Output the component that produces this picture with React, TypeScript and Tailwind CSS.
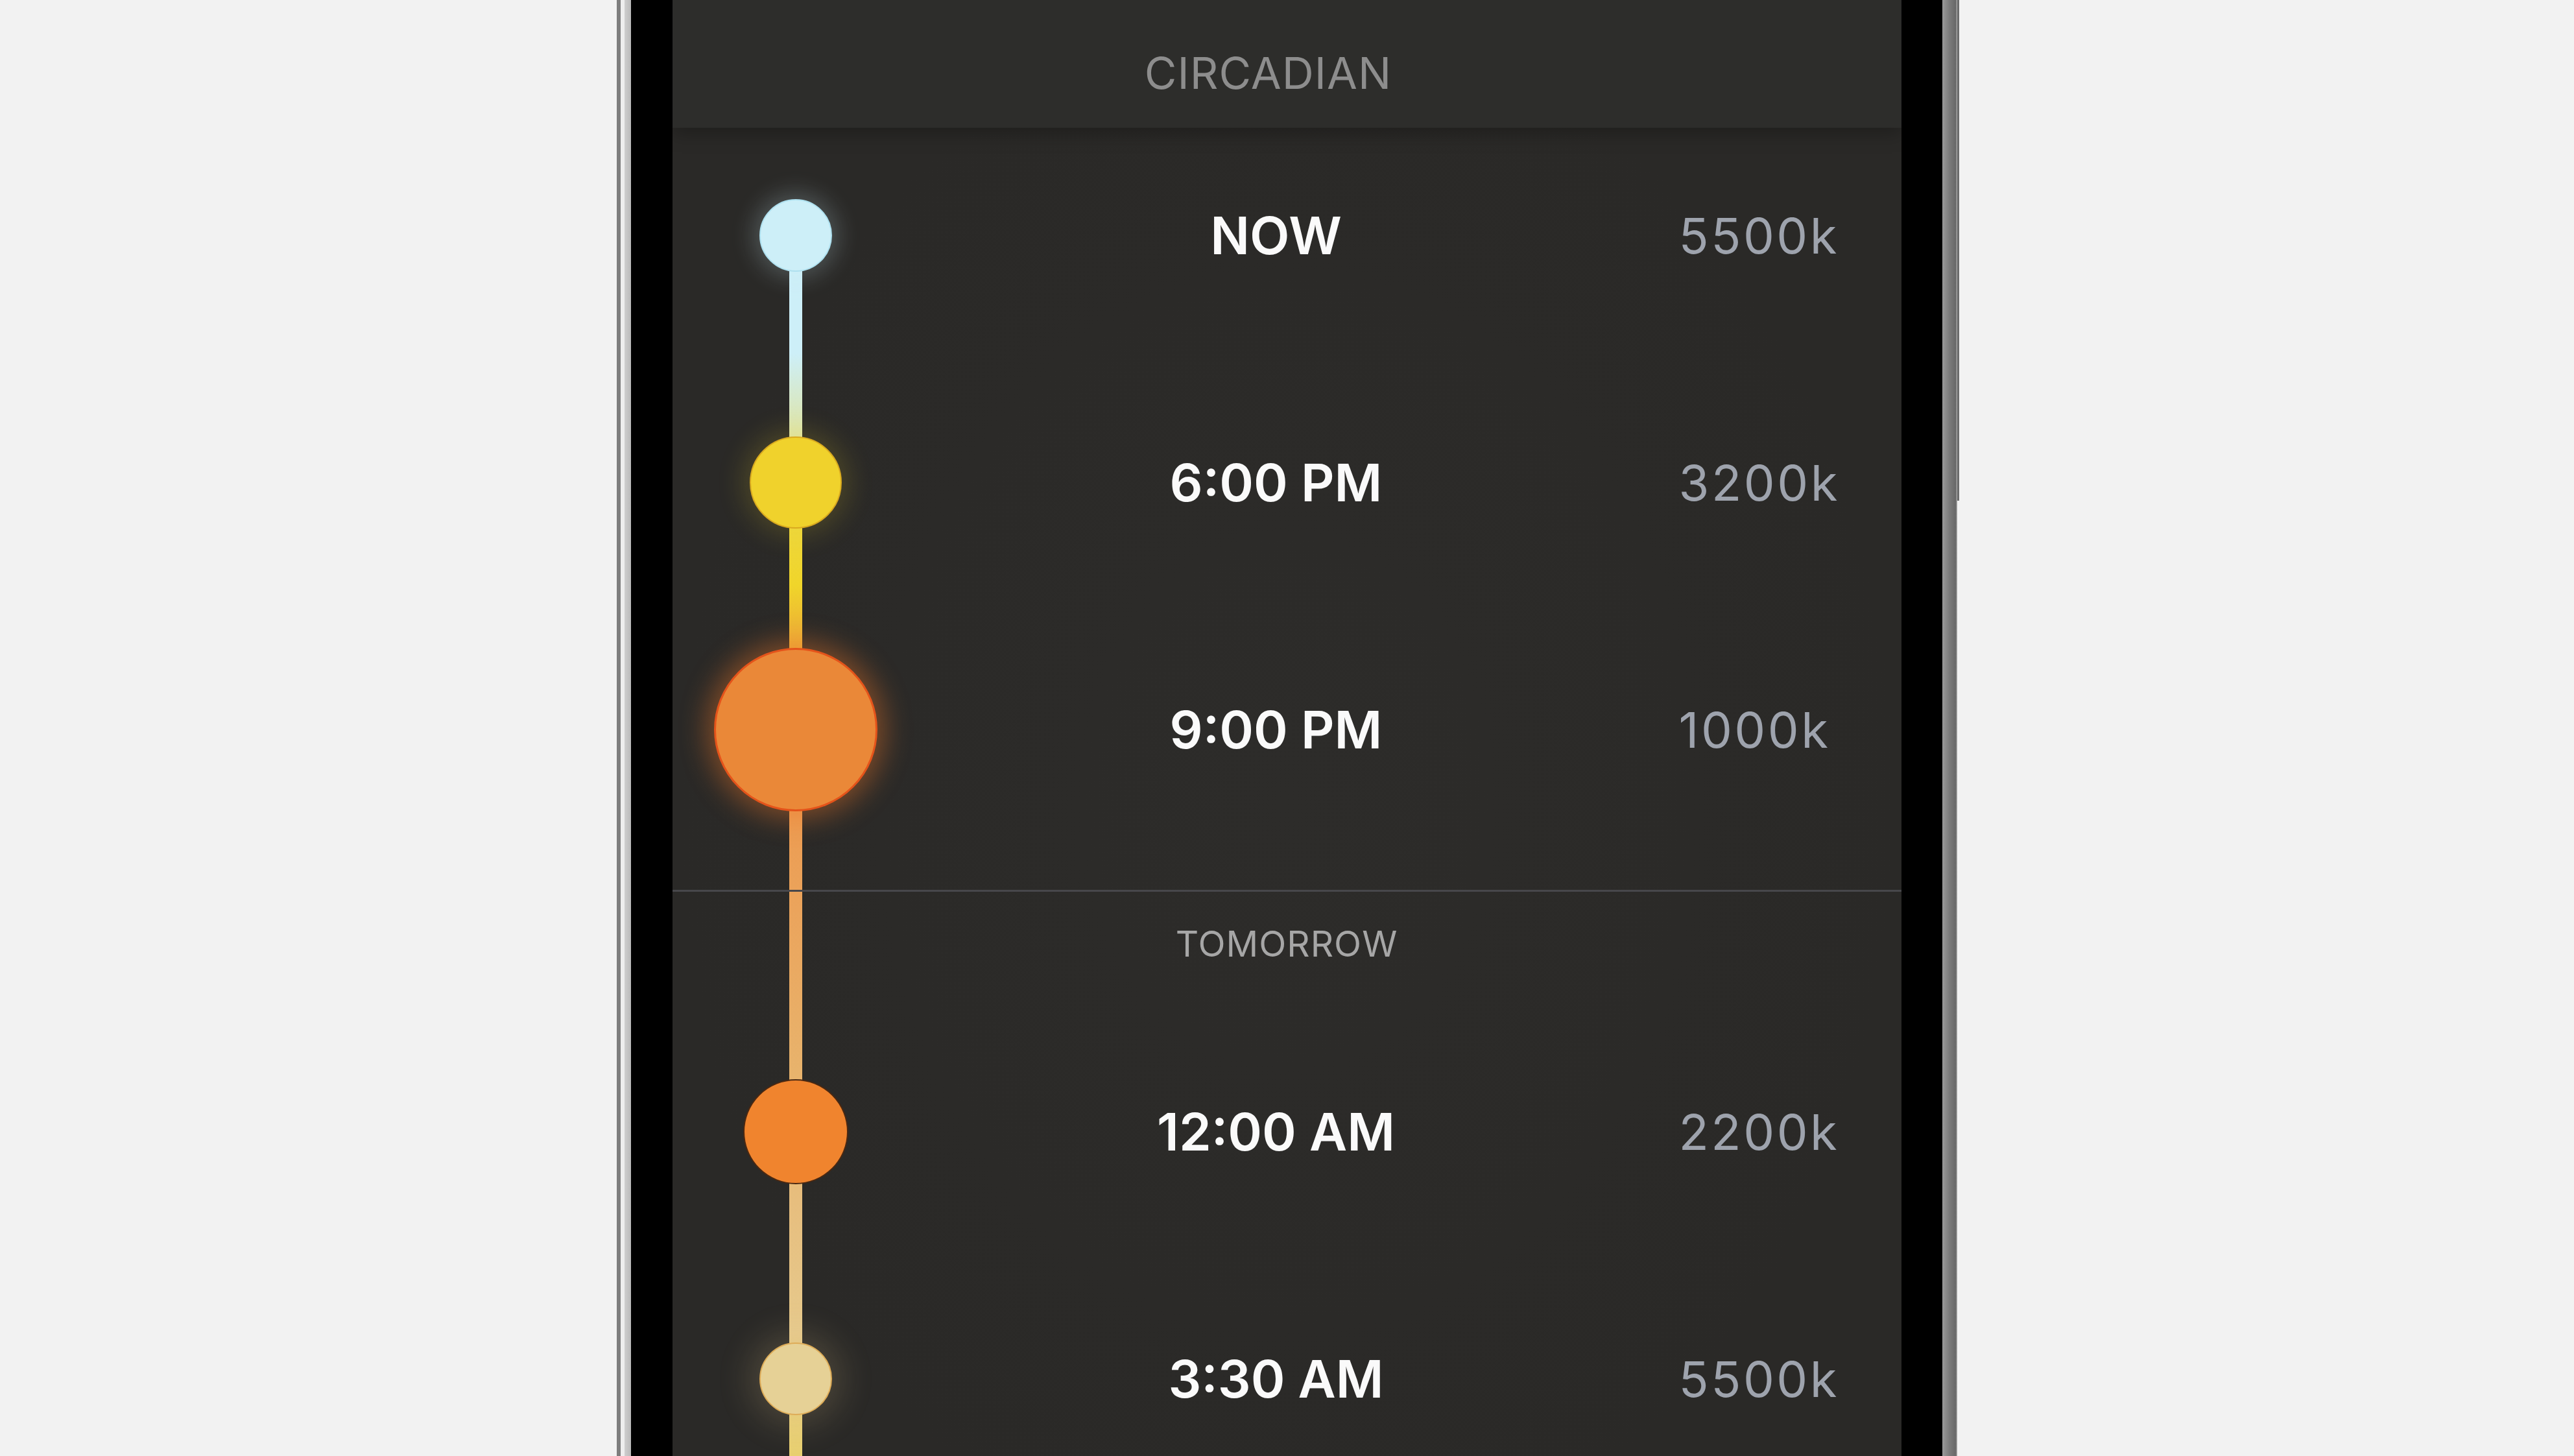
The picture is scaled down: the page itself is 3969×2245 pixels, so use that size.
import type { ReactNode } from "react";

type Stop = {
  time: string;
  kelvin: string;
  dot: string;
};

const TODAY: Stop[] = [
  {
    time: "NOW",
    kelvin: "5500k",
    dot: "h-[112px] w-[112px] border-2 border-[#aee0ef] bg-[#cdeff8] shadow-[0_0_34px_10px_rgba(205,235,245,0.22)]",
  },
  {
    time: "6:00 PM",
    kelvin: "3200k",
    dot: "h-[142px] w-[142px] border-2 border-[#d9a91f] bg-[#f0d22c] shadow-[0_0_40px_10px_rgba(240,210,40,0.18)]",
  },
  {
    time: "9:00 PM",
    kelvin: "1000k",
    dot: "h-[252px] w-[252px] border-[3px] border-[#e4531a] bg-[#ea8838] shadow-[0_0_40px_12px_rgba(238,118,40,0.42)]",
  },
];

const TOMORROW: Stop[] = [
  {
    time: "12:00 AM",
    kelvin: "2200k",
    dot: "h-[162px] w-[162px] border-2 border-[#4a2812] bg-[#f0842e]",
  },
  {
    time: "3:30 AM",
    kelvin: "5500k",
    dot: "h-[112px] w-[112px] border-2 border-[#deac58] bg-[#e6d196] shadow-[0_0_50px_16px_rgba(230,200,140,0.18)]",
  },
];

export default function App() {
  return (
    <div className="flex h-[2245px] w-full justify-center overflow-hidden bg-[#f2f2f2] font-['Inter','Liberation_Sans',sans-serif]">
      <div className="flex h-full">
        {/* left rail */}
        <div className="h-full w-[24px] bg-[linear-gradient(90deg,#f2f2f2_0_2px,#7e7e7e_2px_8px,#eeeeee_8px_14px,#cfcfcf_14px,#b9b9b9_24px)]" />
        <div className="h-full w-[64px] bg-black" />
        <Screen />
        <div className="h-full w-[63px] bg-black" />
        <div className="h-full w-[23px] bg-[linear-gradient(90deg,#9a9a9a,#7a7a7a_50%,#686868_90%,#b5b5b5)]" />
        <div className="w-[3px]">
          <div className="h-[772px] bg-[#6c6c6c]" />
        </div>
      </div>
    </div>
  );
}

function Screen() {
  return (
    <div className="relative flex h-full w-[1895px] flex-col bg-[radial-gradient(ellipse_at_50%_55%,#2d2c2a,#2a2927_70%)]">
      {/* timeline rail */}
      <div className="absolute bottom-0 left-[180px] top-[362px] w-[20px] bg-[linear-gradient(180deg,#cdeff8_0px,#cdeff8_183px,#e0e3a0_318px,#ecd84a_390px,#f0d52a_540px,#eca83a_640px,#ec8c3c_762px,#ec9c52_900px,#eba45c_1040px,#e8b36c_1290px,#e7be7e_1490px,#e6c98c_1690px,#e8d070_1883px)]" />

      <header className="relative z-10 h-[197px] shrink-0 bg-[#2d2d2b] pr-[57px] pt-[82px] text-center shadow-[0_8px_28px_rgba(0,0,0,0.28)]">
        <span className="text-[68px] font-normal leading-[60px] tracking-[1px] text-[#8d8d8d]">CIRCADIAN</span>
      </header>

      <div className="relative -mt-[25px] flex flex-col">
        {TODAY.map((s) => (
          <Row key={s.time} stop={s} />
        ))}
        <div className="h-[57px]" />
        <div className="relative z-[1] h-[3px] bg-[#47474b]" />
        <div className="h-[179px] pt-[58px] text-center">
          <span className="text-[55px] font-normal leading-[44px] tracking-[1px] text-[#a6a6a6]">TOMORROW</span>
        </div>
        {TOMORROW.map((s) => (
          <Row key={s.time} stop={s} />
        ))}
      </div>
    </div>
  );
}

function Row({ stop }: { stop: Stop }) {
  return (
    <div className="flex h-[381px] shrink-0 items-center">
      <Cell className="w-[380px] justify-center">
        <div className={`relative z-[2] rounded-full ${stop.dot}`} />
      </Cell>
      <Cell className="flex-1 justify-center">
        <span className="text-[80px] font-semibold leading-[80px] text-[#fafafa]">{stop.time}</span>
      </Cell>
      <Cell className="w-[413px] pl-[70px]">
        <span className="text-[76px] font-normal leading-[72px] tracking-[3.5px] text-[#9ea3ad]">{stop.kelvin}</span>
      </Cell>
    </div>
  );
}

function Cell({ className, children }: { className?: string; children: ReactNode }) {
  return <div className={`flex items-center ${className ?? ""}`}>{children}</div>;
}
